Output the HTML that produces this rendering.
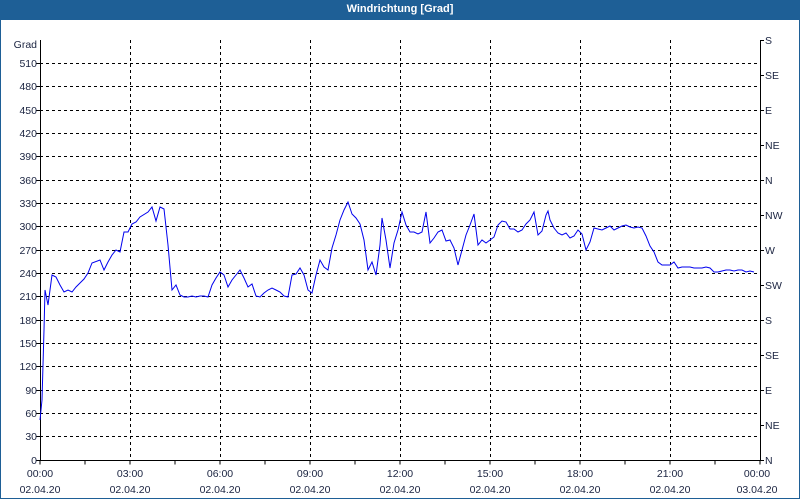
<!DOCTYPE html>
<html><head><style>
body{margin:0;width:800px;height:500px;overflow:hidden;background:#fff;font-family:"Liberation Sans",sans-serif}
.frame{position:absolute;left:0;top:0;width:798px;height:498px;border:1px solid #1e5f96;border-top:none}
.title{position:absolute;left:0;top:0;width:800px;height:20px;background:#1e5f96;color:#fff;font-size:11px;font-weight:bold;text-align:center;line-height:19px}
</style></head><body>
<div class="frame"></div>
<div class="title">Windrichtung [Grad]</div>
<svg width="800" height="500" style="position:absolute;left:0;top:0" font-family="Liberation Sans, sans-serif" font-size="10.5" fill="#1a2340">
<g stroke="#000" stroke-dasharray="3,3" stroke-width="1">
<line x1="40" x2="760" y1="63.5" y2="63.5"/><line x1="40" x2="760" y1="86.5" y2="86.5"/><line x1="40" x2="760" y1="110.5" y2="110.5"/><line x1="40" x2="760" y1="133.5" y2="133.5"/><line x1="40" x2="760" y1="156.5" y2="156.5"/><line x1="40" x2="760" y1="180.5" y2="180.5"/><line x1="40" x2="760" y1="203.5" y2="203.5"/><line x1="40" x2="760" y1="226.5" y2="226.5"/><line x1="40" x2="760" y1="250.5" y2="250.5"/><line x1="40" x2="760" y1="273.5" y2="273.5"/><line x1="40" x2="760" y1="296.5" y2="296.5"/><line x1="40" x2="760" y1="320.5" y2="320.5"/><line x1="40" x2="760" y1="343.5" y2="343.5"/><line x1="40" x2="760" y1="366.5" y2="366.5"/><line x1="40" x2="760" y1="390.5" y2="390.5"/><line x1="40" x2="760" y1="413.5" y2="413.5"/><line x1="40" x2="760" y1="436.5" y2="436.5"/>
<line x1="130.5" x2="130.5" y1="40" y2="460"/><line x1="220.5" x2="220.5" y1="40" y2="460"/><line x1="310.5" x2="310.5" y1="40" y2="460"/><line x1="400.5" x2="400.5" y1="40" y2="460"/><line x1="490.5" x2="490.5" y1="40" y2="460"/><line x1="580.5" x2="580.5" y1="40" y2="460"/><line x1="670.5" x2="670.5" y1="40" y2="460"/>
</g>
<g stroke="#000" stroke-width="1">
<line x1="40.5" x2="40.5" y1="40" y2="461"/><line x1="760.5" x2="760.5" y1="40" y2="461"/><line x1="40" x2="761" y1="460.5" y2="460.5"/>
<path d="M40 460.5v4M85 460.5v4M130 460.5v4M175 460.5v4M220 460.5v4M265 460.5v4M310 460.5v4M355 460.5v4M400 460.5v4M445 460.5v4M490 460.5v4M535 460.5v4M580 460.5v4M625 460.5v4M670 460.5v4M715 460.5v4M760 460.5v4"/>
<path d="M36 63.5h4M36 86.5h4M36 110.5h4M36 133.5h4M36 156.5h4M36 180.5h4M36 203.5h4M36 226.5h4M36 250.5h4M36 273.5h4M36 296.5h4M36 320.5h4M36 343.5h4M36 366.5h4M36 390.5h4M36 413.5h4M36 436.5h4M36 460.5h4"/>
<path d="M760 40.5h4M760 75.5h4M760 110.5h4M760 145.5h4M760 180.5h4M760 215.5h4M760 250.5h4M760 285.5h4M760 320.5h4M760 355.5h4M760 390.5h4M760 425.5h4M760 460.5h4"/>
</g>
<g text-anchor="end">
<text x="37" y="48">Grad</text><text x="37" y="67">510</text><text x="37" y="90">480</text><text x="37" y="114">450</text><text x="37" y="137">420</text><text x="37" y="160">390</text><text x="37" y="184">360</text><text x="37" y="207">330</text><text x="37" y="230">300</text><text x="37" y="254">270</text><text x="37" y="277">240</text><text x="37" y="300">210</text><text x="37" y="324">180</text><text x="37" y="347">150</text><text x="37" y="370">120</text><text x="37" y="394">90</text><text x="37" y="417">60</text><text x="37" y="440">30</text><text x="37" y="464">0</text>
</g>
<g>
<text x="765" y="44">S</text><text x="765" y="79">SE</text><text x="765" y="114">E</text><text x="765" y="149">NE</text><text x="765" y="184">N</text><text x="765" y="219">NW</text><text x="765" y="254">W</text><text x="765" y="289">SW</text><text x="765" y="324">S</text><text x="765" y="359">SE</text><text x="765" y="394">E</text><text x="765" y="429">NE</text><text x="765" y="464">N</text>
</g>
<g text-anchor="middle">
<text x="40" y="477">00:00</text><text x="40" y="493">02.04.20</text>
<text x="130" y="477">03:00</text><text x="130" y="493">02.04.20</text>
<text x="220" y="477">06:00</text><text x="220" y="493">02.04.20</text>
<text x="310" y="477">09:00</text><text x="310" y="493">02.04.20</text>
<text x="400" y="477">12:00</text><text x="400" y="493">02.04.20</text>
<text x="490" y="477">15:00</text><text x="490" y="493">02.04.20</text>
<text x="580" y="477">18:00</text><text x="580" y="493">02.04.20</text>
<text x="670" y="477">21:00</text><text x="670" y="493">02.04.20</text>
<text x="757" y="477">00:00</text><text x="757" y="493">03.04.20</text>
</g>
<polyline fill="none" stroke="#0000ee" stroke-width="1" points="40,420 42,400 44,330 45,290 48,305 52,275 56,277 60,285 64,292 68,290 72,292 76,287 80,283 84,279 88,273 92,263 100,260 104,270 108,262 112,255 116,250 120,252 124,232 128,232 132,224 136,222 140,217 148,212 152,207 156,221 160,207 164,209 168,245 172,290 176,285 180,295 184,297 188,297 192,296 196,297 200,296 204,296 208,297 212,285 216,278 220,272 224,275 228,287 232,280 236,275 240,270 244,278 248,287 252,284 256,296 260,297 264,293 268,290 272,288 276,290 280,292 284,296 288,297 292,275 296,274 300,268 304,275 308,290 312,293 316,275 320,260 324,267 328,270 332,248 336,235 340,220 344,210 348,202 352,214 356,218 360,224 364,240 368,270 372,262 376,275 380,245 382,218 386,240 390,268 394,243 398,230 402,212 406,225 410,232 414,232 418,234 422,232 426,212 430,243 434,238 438,232 442,230 446,241 450,240 454,248 458,265 462,250 466,235 470,225 474,214 478,245 482,240 486,243 490,240 494,237 498,225 502,221 506,222 510,229 514,229 518,232 522,230 526,224 530,220 534,212 538,235 542,231 546,215 548,211 550,220 554,228 558,233 562,235 566,233 570,238 574,236 578,230 582,234 586,250 590,242 594,228 598,229 602,230 606,228 610,226 614,230 618,228 622,226 626,225 630,227 634,228 638,227 642,228 646,236 650,246 654,252 658,262 662,265 666,265 670,265 674,262 678,268 682,267 686,267 690,267 694,268 698,268 702,268 706,267 710,268 714,272 718,272 722,271 726,270 730,270 734,271 738,270 742,270 746,272 750,271 754,272"/>
</svg>
</body></html>
